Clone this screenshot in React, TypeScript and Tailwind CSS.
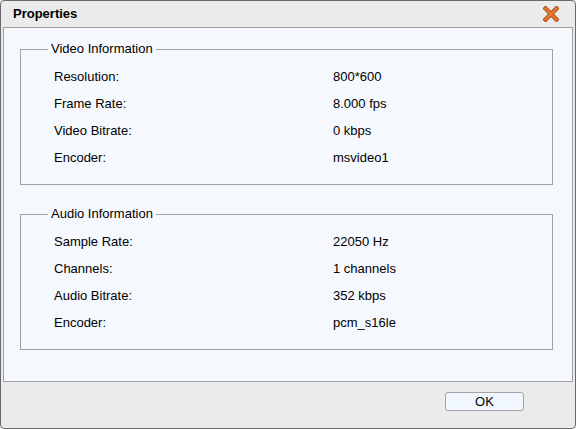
import React from 'react';

type Row = { label: string; value: string };

const videoRows: Row[] = [
  { label: 'Resolution:', value: '800*600' },
  { label: 'Frame Rate:', value: '8.000 fps' },
  { label: 'Video Bitrate:', value: '0 kbps' },
  { label: 'Encoder:', value: 'msvideo1' },
];

const audioRows: Row[] = [
  { label: 'Sample Rate:', value: '22050 Hz' },
  { label: 'Channels:', value: '1 channels' },
  { label: 'Audio Bitrate:', value: '352 kbps' },
  { label: 'Encoder:', value: 'pcm_s16le' },
];

const CloseIcon = () => (
  <svg width="16" height="16" viewBox="0 0 16 16" className="block">
    <path d="M2.5 2.5 L13.5 13.5 M13.5 2.5 L2.5 13.5" stroke="#9a4212" strokeWidth="4.4" strokeLinecap="square" />
    <path d="M2.5 2.5 L13.5 13.5 M13.5 2.5 L2.5 13.5" stroke="#e8762c" strokeWidth="2.8" strokeLinecap="square" />
  </svg>
);

const InfoGroup = ({ title, rows, className = '' }: { title: string; rows: Row[]; className?: string }) => (
  <div className={`relative border border-[#a0a0a0] pl-[33px] py-[13px] ${className}`}>
    <span className="absolute left-[27px] top-[-9px] bg-[#f5f9fe] px-[3px] leading-[16px]">{title}</span>
    {rows.map(row => (
      <div key={row.label} className="flex items-center h-[27px]">
        <span className="w-[279px]">{row.label}</span>
        <span>{row.value}</span>
      </div>
    ))}
  </div>
);

export default function App() {
  return (
    <div className="w-[576px] h-[429px] bg-white">
      <div
        className="w-[576px] h-[429px] border border-[#6a6a6a] rounded-[4px] bg-[#ebebeb] flex flex-col text-[13px] text-black"
        style={{ fontFamily: '"Liberation Sans", Arial, sans-serif' }}
      >
        <div className="h-[26px] flex items-center justify-between pl-[12px] pr-[16px]">
          <span className="font-bold text-[13px]">Properties</span>
          <CloseIcon />
        </div>

        <div className="mx-[2px] h-[355px] border border-[#a0a0a0] bg-[#f5f9fe] pl-[16px] pr-[19px] pt-[21px]">
          <InfoGroup title="Video Information" rows={videoRows} />
          <InfoGroup title="Audio Information" rows={audioRows} className="mt-[29px]" />
        </div>

        <div className="flex-1 flex justify-end items-start pt-[10px] pr-[51px]">
          <button className="w-[79px] h-[19px] border border-[#a4a4a4] rounded-[3px] bg-[#f1f7fe] text-[13px] leading-none flex items-center justify-center">
            OK
          </button>
        </div>
      </div>
    </div>
  );
}
